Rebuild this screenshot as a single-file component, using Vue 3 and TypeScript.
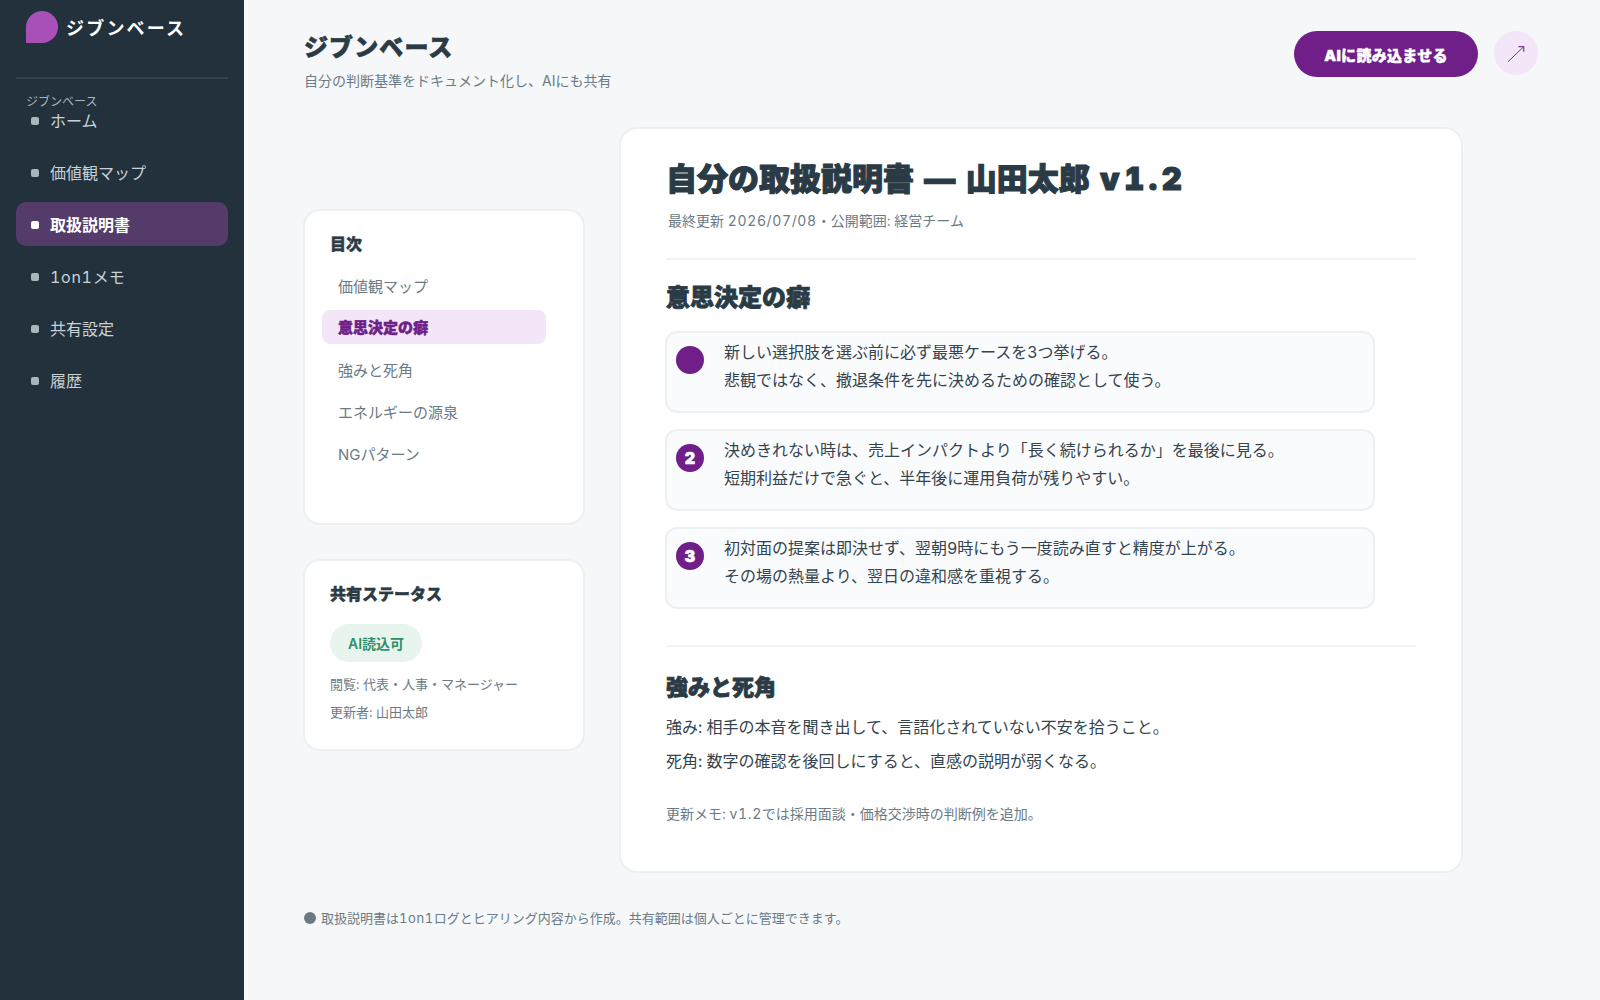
<script setup lang="ts">
interface NavItem { label: string; latin?: string; active?: boolean }
const nav: NavItem[] = [
  { label: 'ホーム' },
  { label: '価値観マップ' },
  { label: '取扱説明書', active: true },
  { label: 'メモ', latin: '1on1' },
  { label: '共有設定' },
  { label: '履歴' },
]
const toc = [
  { label: '価値観マップ' },
  { label: '意思決定の癖', active: true },
  { label: '強みと死角' },
  { label: 'エネルギーの源泉' },
  { label: 'NGパターン' },
]
const habits = [
  { n: '', lines: ['新しい選択肢を選ぶ前に必ず最悪ケースを3つ挙げる。', '悲観ではなく、撤退条件を先に決めるための確認として使う。'] },
  { n: '2', lines: ['決めきれない時は、売上インパクトより「長く続けられるか」を最後に見る。', '短期利益だけで急ぐと、半年後に運用負荷が残りやすい。'] },
  { n: '3', lines: ['初対面の提案は即決せず、翌朝9時にもう一度読み直すと精度が上がる。', 'その場の熱量より、翌日の違和感を重視する。'] },
]
</script>

<template>
  <div class="app">
    <aside class="side">
      <div class="brand">
        <span class="logo"></span>
        <span class="brand-name">ジブンベース</span>
      </div>
      <div class="side-rule"></div>
      <div class="side-label">ジブンベース</div>
      <nav class="nav">
        <a v-for="item in nav" :key="item.label" class="nav-item" :class="{ active: item.active }">
          <span class="nav-dot"></span>
          <span><span v-if="item.latin" class="lat">{{ item.latin }}</span>{{ item.label }}</span>
        </a>
      </nav>
    </aside>
    <main class="main">
      <header class="head">
        <div>
          <h1 class="page-title">ジブンベース</h1>
          <p class="page-sub">自分の判断基準をドキュメント化し、AIにも共有</p>
        </div>
        <div class="head-actions">
          <button class="cta">AIに読み込ませる</button>
          <span class="round">
            <svg width="20" height="20" viewBox="0 0 20 20" fill="none" stroke="#7b3a94" stroke-width="1">
              <path d="M2 18.7 L17.7 3.7" />
              <path d="M12.4 3.7 H17.7 V8.7" stroke-width="1.2" />
            </svg>
          </span>
        </div>
      </header>
      <div class="cols">
        <div class="left">
          <section class="card toc">
            <h3 class="card-title">目次</h3>
            <ul class="toc-list">
              <li v-for="t in toc" :key="t.label" class="toc-item" :class="{ active: t.active }">{{ t.label }}</li>
            </ul>
          </section>
          <section class="card status">
            <h3 class="card-title">共有ステータス</h3>
            <span class="pill">AI読込可</span>
            <p class="status-line">閲覧: 代表・人事・マネージャー</p>
            <p class="status-line">更新者: 山田太郎</p>
          </section>
        </div>
        <article class="doc">
          <h2 class="doc-title">自分の取扱説明書 — 山田太郎 <span class="ver">v1.2</span></h2>
          <p class="doc-meta">最終更新 <span class="lat">2026/07/08</span>・公開範囲: 経営チーム</p>
          <hr class="rule rule-a" />
          <h3 class="doc-h">意思決定の癖</h3>
          <div class="habits">
            <div v-for="(h, i) in habits" :key="i" class="habit">
              <span class="num">{{ h.n }}</span>
              <div class="habit-text">
                <div v-for="l in h.lines" :key="l">{{ l }}</div>
              </div>
            </div>
          </div>
          <hr class="rule rule-b" />
          <h3 class="doc-h second">強みと死角</h3>
          <p class="para first">強み: 相手の本音を聞き出して、言語化されていない不安を拾うこと。</p>
          <p class="para">死角: 数字の確認を後回しにすると、直感の説明が弱くなる。</p>
          <p class="memo">更新メモ: <span class="lat">v1.2</span>では採用面談・価格交渉時の判断例を追加。</p>
        </article>
      </div>
      <footer class="foot"><span class="foot-dot"></span><span>取扱説明書は<span class="lat">1on1</span>ログとヒアリング内容から作成。共有範囲は個人ごとに管理できます。</span></footer>
    </main>
  </div>
</template>

<style>
html, body { margin: 0; background: #f5f7f9; }
</style>

<style scoped>
* { box-sizing: border-box; }
.app {
  display: flex;
  width: 1600px;
  height: 1000px;
  overflow: hidden;
  background: #f5f7f9;
  font-family: Inter, "Noto Sans CJK JP", sans-serif;
  font-variant-numeric: tabular-nums;
  color: #2a3b45;
}
.lat { letter-spacing: .045em; }
.side {
  width: 244px;
  flex: none;
  background: #22313b;
  padding: 11px 16px 0;
}
.brand { display: flex; align-items: center; gap: 8px; padding-left: 10px; height: 32px; }
.logo { width: 32px; height: 32px; background: #a94fb8; border-radius: 50% 50% 50% 0; }
.brand-name { color: #fff; font-size: 18px; font-weight: 600; letter-spacing: 2.2px; }
.side-rule { height: 2px; background: #33424b; margin-top: 34px; }
.side-label { color: #a9b5bb; font-size: 12px; line-height: 16px; margin: 15px 0 -12px 10px; position: relative; }
.nav { display: flex; flex-direction: column; gap: 8px; }
.nav-item {
  display: flex;
  align-items: center;
  gap: 10px;
  height: 44px;
  padding-left: 16px;
  border-radius: 10px;
  font-size: 16px;
  color: #c9d2d7;
}
.nav-item.active { background: #543b69; color: #fff; font-weight: 600; }
.nav-dot { width: 8px; height: 8px; border-radius: 2px; background: #aab6bc; margin: 1px 1px 0 -1px; }
.nav-item.active .nav-dot { background: #fff; }

.main { flex: 1; padding: 30px 60px 0 59px; min-width: 0; }
.head { display: flex; justify-content: space-between; align-items: flex-start; height: 97px; padding-left: 1px; }
.page-title { margin: 2px 0 0; font-size: 24px; line-height: 32px; font-weight: 900; letter-spacing: 1.1px; color: #2a3b45; -webkit-text-stroke: .6px currentColor; }
.page-sub { margin: 7px 0 0; font-size: 14px; line-height: 20px; color: #6b7b86; }
.head-actions { display: flex; gap: 16px; align-items: flex-start; padding: 1px 2px 0 0; }
.cta {
  width: 184px;
  height: 46px;
  border: none;
  border-radius: 23px;
  background: #6f1f87;
  color: #fff;
  font: 900 15px Inter, "Noto Sans CJK JP", sans-serif;
  letter-spacing: .3px;
  -webkit-text-stroke: .4px currentColor;
}
.round { width: 44px; height: 44px; border-radius: 50%; background: #f3e6f8; display: flex; align-items: center; justify-content: center; }

.cols { display: flex; gap: 34px; align-items: flex-start; }
.left { width: 282px; flex: none; margin-top: 82px; display: flex; flex-direction: column; gap: 34px; }
.card { background: #fff; border: 2px solid #edf0f3; border-radius: 17px; padding: 21px 25px; }
.toc { height: 316px; }
.status { height: 192px; }
.card-title { margin: 0; font-size: 16px; line-height: 24px; font-weight: 900; color: #2a3b45; -webkit-text-stroke: .4px currentColor; }
.toc-list { list-style: none; margin: 12px 0 0 -8px; padding: 0; width: 224px; display: flex; flex-direction: column; gap: 8px; }
.toc-item { height: 34px; line-height: 37px; padding-left: 16px; border-radius: 8px; font-size: 15px; color: #6b7b86; }
.toc-item.active { background: #f3e6f8; color: #6f1f87; font-weight: 900; line-height: 36px; -webkit-text-stroke: .5px currentColor; }
.pill {
  display: block;
  width: 92px;
  height: 38px;
  line-height: 40px;
  text-align: center;
  margin-top: 18px;
  border-radius: 19px;
  background: #e8f5ee;
  color: #2f8f6b;
  font-size: 14px;
  font-weight: 600;
}
.status-line { margin: 0; font-size: 13px; line-height: 28px; color: #6b7b86; }
.pill + .status-line { margin-top: 8px; }

.doc { width: 844px; height: 746px; flex: none; background: #fff; border: 2px solid #edf0f3; border-radius: 18px; padding: 26px 45px; }
.doc-title { margin: 0; font-size: 31px; line-height: 48px; font-weight: 900; color: #2a3b45; -webkit-text-stroke: 1.1px currentColor; word-spacing: 2px; }
.ver { letter-spacing: 4.6px; }
.doc-meta { margin: 7px 0 0 2px; font-size: 14px; line-height: 22px; color: #6b7b86; }
.rule { border: none; height: 2px; background: #f1f3f6; margin: 0; }
.rule-a { margin-top: 26px; }
.rule-b { margin-top: 36px; }
.doc-h { margin: 21px 0 0; font-size: 24px; line-height: 34px; font-weight: 900; color: #2a3b45; -webkit-text-stroke: .8px currentColor; }
.doc-h.second { margin-top: 23px; font-size: 22px; }
.habits { display: flex; flex-direction: column; gap: 16px; margin-top: 16px; width: 710px; margin-left: -1px; }
.habit { display: flex; gap: 20px; height: 82px; padding: 13px 9px; border: 2px solid #edf0f3; border-radius: 12px; background: #fafbfd; }
.num {
  width: 28px;
  height: 28px;
  flex: none;
  border-radius: 50%;
  background: #6f1f87;
  color: #fff;
  font-size: 16px;
  font-weight: 900;
  -webkit-text-stroke: .5px currentColor;
  display: flex;
  align-items: center;
  justify-content: center;
}
.habit-text { font-size: 16px; line-height: 28px; margin-top: -8px; color: #34444e; }
.para { margin: 0; font-size: 16px; line-height: 34px; color: #34444e; }
.para.first { margin-top: 6px; }
.memo { margin: 25px 0 0; font-size: 14px; line-height: 22px; color: #6b7b86; }
.foot { margin-top: 35px; padding-left: 1px; display: flex; align-items: center; font-size: 13px; color: #6b7b86; }
.foot-dot { width: 12px; height: 12px; border-radius: 50%; background: #6b7b86; margin-right: 5px; }
</style>
